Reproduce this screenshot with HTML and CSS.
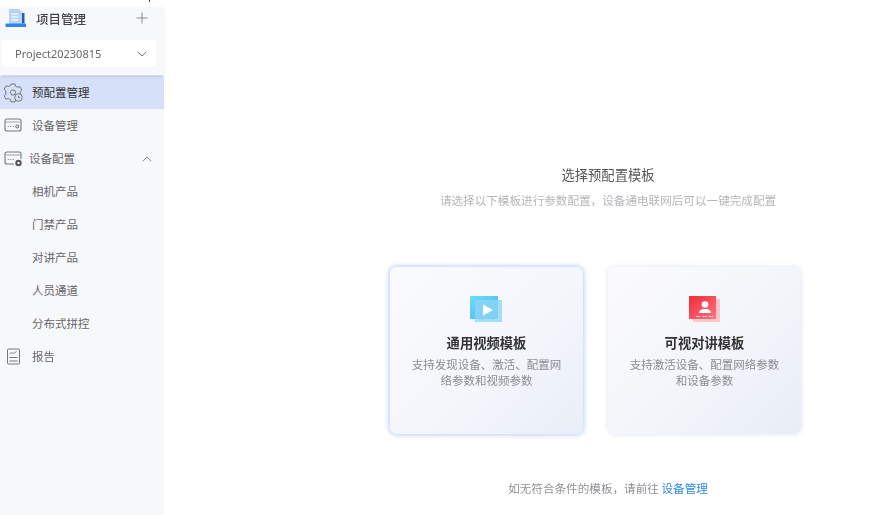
FILE: index.html
```html
<!DOCTYPE html>
<html lang="zh-CN">
<head>
<meta charset="utf-8">
<title>预配置管理</title>
<link rel="stylesheet" href="styles.css">
</head>
<body>
<div class="app">
  <span class="speck"></span>
  <aside class="sidebar">
    <div class="top">
      <div class="brand">
        <svg class="brand-icon" width="22" height="20" viewBox="0 0 22 20">
          <path d="M4 1h10l3 3v12H4z" fill="#b9d3f7"/>
          <path d="M6.500 6h7M6.500 9h7M6.500 12h7" stroke="#eef5ff" stroke-width="1.300"/>
          <path d="M17 5h2.500v10.500H17z" fill="#1c5fb8"/>
          <path d="M1 15.500h19.500c.4 0 .5.300.5.600V19H1.500C.8 19 .5 18.600.5 18v-2z" fill="#2f86ea"/>
        </svg>
        <span class="brand-name">项目管理</span>
        <svg class="plus" width="12" height="12" viewBox="0 0 12 12"><path d="M6 .5v11M.5 6h11" stroke="#8a8d94" stroke-width="1"/></svg>
      </div>
      <div class="select">
        <span class="select-text">Project20230815</span>
        <svg width="10" height="6" viewBox="0 0 10 6"><path d="M.7.8 5 5l4.300-4.200" fill="none" stroke="#777" stroke-width="1"/></svg>
      </div>
    </div>
    <nav class="nav">
      <div class="row active">
        <svg class="ico" width="20" height="20" viewBox="0 0 20 20" fill="none" stroke="#777" stroke-width="1">
          <path d="M8 1h4l.5 2.200 2.200 1.100 2.200-.7 2 3.400-1.700 1.600v2.600l1.700 1.600-2 3.400-2.200-.7-2.200 1.100-.5 2.200H8l-.5-2.200-2.200-1.100-2.200.7-2-3.400 1.700-1.600V7.800L1.100 6.200l2-3.400 2.200.7 2.200-1.100z"/>
          <circle cx="10" cy="9.500" r="2.600"/>
          <circle cx="15.500" cy="14.500" r="3.800" fill="#d6e0f9"/>
          <path d="M15.500 12.800v1.900h1.600"/>
        </svg>
        <span class="label">预配置管理</span>
      </div>
      <div class="row">
        <svg class="ico" width="20" height="20" viewBox="0 0 20 20" fill="none" stroke="#777" stroke-width="1.100">
          <rect x="2" y="3" width="16" height="12" rx="2"/>
          <path d="M2 6h16" stroke="#aaa"/>
          <path d="M4.800 10.500h1M7.300 10.500h1M9.800 10.500h1" stroke-width="1.200"/>
          <circle cx="14.300" cy="10.500" r="1.500"/>
        </svg>
        <span class="label">设备管理</span>
      </div>
      <div class="row">
        <svg class="ico" width="20" height="20" viewBox="0 0 20 20" fill="none" stroke="#777" stroke-width="1.100">
          <path d="M11 15H4a2 2 0 0 1-2-2V5a2 2 0 0 1 2-2h12a2 2 0 0 1 2 2v5"/>
          <path d="M2 6h16" stroke="#aaa"/>
          <path d="M4.800 10.500h1M7.300 10.500h1M9.800 10.500h1" stroke-width="1.200"/>
          <circle cx="15.500" cy="14" r="2.200" stroke="#555" stroke-width="2"/>
        </svg>
        <span class="label tight">设备配置</span>
        <svg class="caret" width="10" height="6" viewBox="0 0 10 6"><path d="M.7 5.200 5 1l4.300 4.200" fill="none" stroke="#888" stroke-width="1"/></svg>
      </div>
      <div class="row"><span class="label sub">相机产品</span></div>
      <div class="row"><span class="label sub">门禁产品</span></div>
      <div class="row"><span class="label sub">对讲产品</span></div>
      <div class="row"><span class="label sub">人员通道</span></div>
      <div class="row"><span class="label sub">分布式拼控</span></div>
      <div class="row">
        <svg class="ico" width="20" height="20" viewBox="0 0 20 20" fill="none" stroke="#777" stroke-width="1">
          <rect x="4.500" y="2" width="12" height="15" rx="1"/>
          <path d="M6.500 7l2-1.500 2 1 3-2" stroke-width=".9"/>
          <path d="M6.500 10.500h8M6.500 14h8"/>
        </svg>
        <span class="label report">报告</span>
      </div>
    </nav>
  </aside>
  <main class="main">
    <h1 class="title">选择预配置模板</h1>
    <p class="hint">请选择以下模板进行参数配置，设备通电联网后可以一键完成配置</p>
    <div class="cards">
      <section class="card selected">
        <svg class="card-icon" width="33" height="28" viewBox="0 0 33 28">
          <defs>
            <linearGradient id="blue" x1="0" y1="0" x2="1" y2="1"><stop offset="0" stop-color="#6fdcfb"/><stop offset="1" stop-color="#45b4f0"/></linearGradient>
          </defs>
          <rect x="0" y="1" width="28" height="23" fill="url(#blue)"/>
          <rect x="5" y="5" width="27" height="22" fill="#8fd6f6" opacity=".8"/>
          <path d="M13 9.500 23 15l-10 5.500z" fill="#fff"/>
        </svg>
        <h2 class="card-title">通用视频模板</h2>
        <p class="card-desc">支持发现设备、激活、配置网<br>络参数和视频参数</p>
      </section>
      <section class="card">
        <svg class="card-icon" width="32" height="28" viewBox="0 0 32 28">
          <defs>
            <linearGradient id="red" x1="0" y1="0" x2="1" y2="1"><stop offset="0" stop-color="#ee2c38"/><stop offset="1" stop-color="#ff7480"/></linearGradient>
          </defs>
          <rect x="4" y="4" width="27" height="23" fill="#ffbcc2" opacity=".85"/>
          <rect x="0" y="1" width="27" height="23" fill="url(#red)"/>
          <circle cx="16" cy="9.500" r="3.300" fill="#fff"/>
          <path d="M10 18c0-2.800 2.500-4 6-4s6 1.200 6 4z" fill="#fff"/>
          <path d="M7 21.500h4M13.500 21.500h4M20 21.500h4" stroke="#ffd5d8" stroke-width="1.200"/>
        </svg>
        <h2 class="card-title">可视对讲模板</h2>
        <p class="card-desc">支持激活设备、配置网络参数<br>和设备参数</p>
      </section>
    </div>
    <p class="foot">如无符合条件的模板，请前往 <a class="link">设备管理</a></p>
  </main>
</div>
</body>
</html>
```
FILE: styles.css
```css
* { box-sizing: border-box; }
html, body { margin: 0; padding: 0; background: #fff; }
body {
  width: 870px;
  height: 515px;
  overflow: hidden;
  font-family: "Noto Sans CJK SC", "Liberation Sans", sans-serif;
}
.app {
  position: relative;
  display: flex;
  width: 870px;
  height: 515px;
  filter: blur(0.6px);
}
.speck {
  position: absolute;
  left: 149px;
  top: 0;
  width: 1px;
  height: 2px;
  background: #1d3f8a;
}
.sidebar {
  flex: none;
  width: 164px;
  margin-top: 7px;
  background: #f7f8fb;
}
.top {
  position: relative;
  z-index: 1;
  height: 68px;
  padding: 0 8px 0 2px;
  background: #f7f8fb;
  box-shadow: 0 2px 3px -1px rgba(120, 125, 140, .4);
}
.brand {
  display: flex;
  align-items: center;
  height: 22px;
  padding-left: 3px;
}
.brand-icon { flex: none; }
.brand-name {
  margin-left: 9px;
  font-size: 12.500px;
  font-weight: 500;
  color: #444;
}
.plus { margin-left: auto; margin-right: 8px; }
.select {
  display: flex;
  align-items: center;
  justify-content: space-between;
  height: 27px;
  margin-top: 11px;
  padding: 0 9px 0 13px;
  background: #fff;
  border-radius: 4px;
  font-family: "Noto Sans", "Liberation Sans", sans-serif;
  font-size: 11px;
  color: #666;
}
.select-text { padding-bottom: 1px; }
.nav { padding-top: 1px; }
.row {
  display: flex;
  align-items: center;
  height: 33px;
  padding-left: 3px;
  font-size: 11.500px;
  color: #666;
}
.row.active {
  background: #d6e0f9;
  color: #333;
}
.ico { flex: none; }
.label { margin-left: 9px; padding-bottom: 1px; }
.label.tight { margin-left: 6px; }
.label.sub { margin-left: 29px; }
.caret { margin-left: auto; margin-right: 12px; }
.main {
  flex: none;
  width: 436px;
  margin-left: 226px;
  display: flex;
  flex-direction: column;
  align-items: center;
}
.title {
  margin: 165px 0 0;
  font-size: 13.300px;
  line-height: 20px;
  font-weight: 400;
  color: #555;
}
.hint {
  margin: 6px 0 0;
  font-size: 11.600px;
  line-height: 18px;
  color: #b4b6ba;
}
.cards {
  display: flex;
  gap: 25px;
  align-self: flex-start;
  margin-top: 58px;
}
.card {
  display: flex;
  flex-direction: column;
  align-items: center;
  width: 193px;
  height: 167px;
  padding-top: 28px;
  border-radius: 7px;
  background: linear-gradient(135deg, #fbfbfd 0%, #f3f5fa 55%, #e8edf6 100%);
  box-shadow: 0 0 5px rgba(190, 200, 225, .55);
}
.card.selected {
  background: linear-gradient(135deg, #fafbfe 0%, #f4f6fb 55%, #e9eef8 100%);
  box-shadow: 0 0 5px 1px rgba(160, 185, 245, .75);
}
.card-title {
  margin: 10px 0 0;
  font-size: 13.300px;
  line-height: 20px;
  font-weight: 700;
  color: #333;
}
.card-desc {
  margin: 3px 0 0;
  font-size: 11.500px;
  line-height: 16px;
  color: #8a8c92;
  text-align: center;
}
.foot {
  margin: 45px 0 0;
  font-size: 11.600px;
  line-height: 18px;
  color: #8f9196;
}
.link { color: #2d8ae0; }
```
